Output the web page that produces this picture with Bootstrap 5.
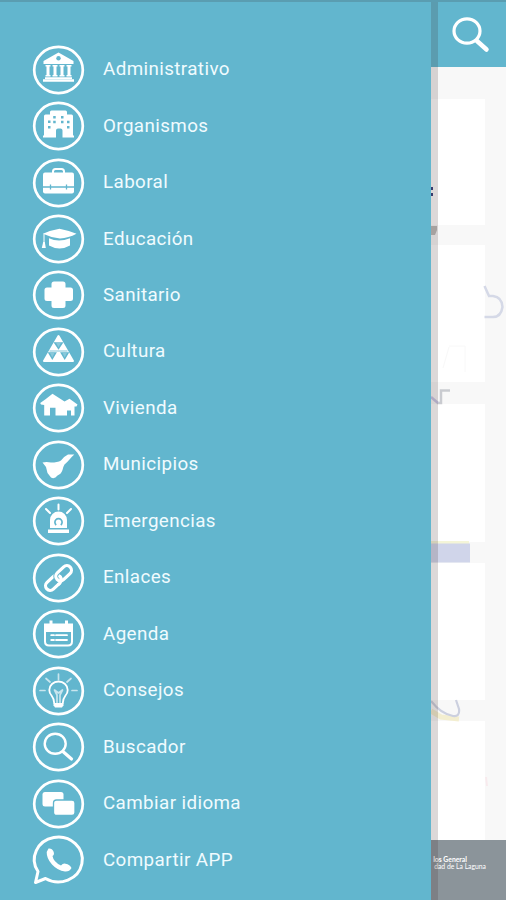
<!DOCTYPE html>
<html lang="es">
<head>
<meta charset="utf-8">
<meta name="viewport" content="width=device-width, initial-scale=1">
<title>Menú</title>
<link href="https://cdn.jsdelivr.net/npm/bootstrap@5.3.0/dist/css/bootstrap.min.css" rel="stylesheet">
<style>
:root{--teal:#62b6ce}
body{font-family:Roboto,"Liberation Sans",sans-serif;background:#f8f8f8}
.screen{width:506px;height:900px}
.drawer{width:431px;background:var(--teal);padding:41.4px 0 0 32px}
.menu-row{height:56.46px;color:#f0fbfe;font-size:18.8px;letter-spacing:.4px;line-height:1}
.menu-row svg{width:53px;height:56px;margin-right:18px;flex:none;fill:#fff;overflow:visible}
.ln{fill:none;stroke:#fff;stroke-linecap:round;stroke-linejoin:round}
.cut{fill:var(--teal)}
.cutln{fill:none;stroke:var(--teal)}
.page-side{width:75px;background:#f8f8f8}
.topbar{height:67px;background:var(--teal)}
.tile{width:54px;background:#fff}
.foot{height:60px;background:#8b949a;color:#fff;font-family:Lato,sans-serif;font-size:6.8px;line-height:7px;padding-top:16px;white-space:nowrap}
.foot div{direction:rtl;width:55px}
.foot .top-line{width:36px}
.shade{left:431px;top:0;width:7px;height:900px;background:rgba(60,40,40,.18)}
.status{left:0;top:0;width:506px;height:2px;background:#5a9db1}
.strokes{left:431px;top:0}
</style>
<script src="https://cdn.jsdelivr.net/npm/bootstrap@5.3.0/dist/js/bootstrap.bundle.min.js"></script>
</head>
<body>
<svg width="0" height="0" class="position-absolute"><defs>
<ellipse id="ring" rx="24.3" ry="23.1" fill="none" stroke="#fff" stroke-width="2.7"/>
</defs></svg>
<div class="screen d-flex position-relative overflow-hidden">
<nav class="drawer flex-shrink-0 d-flex flex-column">
 <a class="menu-row d-flex align-items-center text-decoration-none" href="#"><svg viewBox="-26.5 -28 53 56"><use href="#ring"/>
  <path d="M0-17.500L15-9V-6H-15V-9ZM-13-5h5v1.500h-1v8.500h1v1.500h-5v-1.500h1v-8.500h-1zM-6-5h5v1.500h-1v8.500h1v1.500h-5v-1.500h1v-8.500h-1zM1-5h5v1.500h-1v8.500h1v1.500h-5v-1.500h1v-8.500h-1zM8-5h5v1.500h-1v8.500h1v1.500h-5v-1.500h1v-8.500h-1zM-13.500 7.300h27v1.700h-27zM-15.500 9.300h31v2.400h-31z"/><circle class="cut" cy="-11.800" r="2.200"/></svg><span>Administrativo</span></a>
 <a class="menu-row d-flex align-items-center text-decoration-none" href="#"><svg viewBox="-26.5 -28 53 56"><use href="#ring"/>
  <path d="M-14.500 9.500V-10q0-1.500 1.500-1.500h4.500V-14q0-1.500 1.500-1.500H7q1.500 0 1.500 1.500v2.500H13q1.500 0 1.500 1.500V9.500h1V11.500H4V4.500q0-2-2-2h-2.500q-2 0-2 2v7H-15.500V9.500z"/><path class="cut" d="M-10.500-5.500h2.500v2.500h-2.500zM-5.300-10h2.500v2.500h-2.500zM2.500-10h2.500v2.500H2.500zM-5.300-5.200h2.500v2.500h-2.500zM2.500-5.200h2.500v2.500H2.500zM8.500-5.200h2.500v2.500H8.500zM-10.500 0h2.500v2.500h-2.500zM8.500 0h2.500v2.500H8.500z"/></svg><span>Organismos</span></a>
 <a class="menu-row d-flex align-items-center text-decoration-none" href="#"><svg viewBox="-26.5 -28 53 56"><use href="#ring"/>
  <path class="ln" stroke-width="2" d="M-5.500-10v-1.500q0-2.500 2.500-2.500h6q2.500 0 2.500 2.500v1.500"/><path d="M-13.500-10.500h27q2 0 2 2V8.500q0 2-2 2h-27q-2 0-2-2V-8.500q0-2 2-2z"/><path class="cutln" stroke-width="1.300" d="M-15.500 4H15.500M-8 1.500V6.500M8 1.500V6.500"/></svg><span>Laboral</span></a>
 <a class="menu-row d-flex align-items-center text-decoration-none" href="#"><svg viewBox="-26.5 -28 53 56"><use href="#ring"/>
  <path d="M1-10.300Q9-8.800 18-5.300Q10-1 1.500-.5Q-7-1.200-15.500-5.300Q-8-8.800 1-10.300zM-9.500-.700Q0 3.800 11.500-.700V6.500Q1 12.500-9.500 6.500z"/><path class="ln" stroke-width="1" d="M-14.500-5V4"/><path d="M-15.300 3h1.600l1 6h-4z"/></svg><span>Educación</span></a>
 <a class="menu-row d-flex align-items-center text-decoration-none" href="#"><svg viewBox="-26.5 -28 53 56"><use href="#ring"/>
  <path d="M-4.500-13.500h9q2.500 0 2.500 2.500v3.500h5q2.500 0 2.500 2.500V3.500Q14.500 6 12 6H7v4.500q0 2.500-2.500 2.500h-9Q-7 13-7 10.500V6h-4.500Q-14 6-14 3.500V-5q0-2.500 2.500-2.500H-7V-11q0-2.500 2.500-2.500z"/></svg><span>Sanitario</span></a>
 <a class="menu-row d-flex align-items-center text-decoration-none" href="#"><svg viewBox="-26.5 -28 53 56"><use href="#ring"/>
  <path stroke="#fff" stroke-linejoin="round" stroke-width="2" d="M0-16L14.500 9H-14.500z"/><path class="cut" d="M-5-9.800H5L0-2.300zM-10.800 .200H-1.600L-6.200 8zM1.600 .200H10.800L6.200 8z"/><path d="M-2.500-9.200H2.500L0-4.800zM-8.500 1H-4L-6.200 5.500zM4 1H8.500L6.200 5.500z" opacity=".25"/><path class="cutln" stroke-width=".8" d="M-9-1H9"/></svg><span>Cultura</span></a>
 <a class="menu-row d-flex align-items-center text-decoration-none" href="#"><svg viewBox="-26.5 -28 53 56"><use href="#ring"/>
  <path d="M-6-14.300L6-6.500L11-9.200L19-3.500L18-1.500H16V7.500H12.500V2.500H8.500V7.500H-3V-.300H-8.500V7.500H-14.300V-3L-17.500-3.500L-18.300-5L-13-8.800z"/></svg><span>Vivienda</span></a>
 <a class="menu-row d-flex align-items-center text-decoration-none" href="#"><svg viewBox="-26.5 -28 53 56"><use href="#ring"/>
  <path d="M15.800-10.500Q13-8 11-5.500Q8.500-2.500 6-.500Q4.500 2 4 5Q2.800 9-1 10.500Q-4 14.500-7.500 12.500L-11 8L-12.500 2L-16-2.500Q-12-3.500-7.500-2.500Q-1-2.500 2.500-4.500Q6-9 9.500-10.500z"/></svg><span>Municipios</span></a>
 <a class="menu-row d-flex align-items-center text-decoration-none" href="#"><svg viewBox="-26.5 -28 53 56"><use href="#ring"/>
  <path d="M-8.500 7V-1A8.500 8.500 0 0 1 8.500-1V7zM-10.500 8.500h21v3.500h-21z"/><path class="cutln" stroke-width="1.700" d="M-2.300 4A3.600 3.600 0 1 1 2.300 4"/><path class="ln" stroke-linecap="butt" stroke-width="2" d="M0-16.500V-11.500M-12.500-12L-8.500-8M12.500-12L8.500-8"/></svg><span>Emergencias</span></a>
 <a class="menu-row d-flex align-items-center text-decoration-none" href="#"><svg viewBox="-26.5 -28 53 56"><use href="#ring"/>
  <g transform="rotate(-43)" class="ln" stroke-width="3.200"><rect x="-16" y="-4.600" width="18" height="9.200" rx="4.600"/><rect stroke="#62b6ce" stroke-width="5" x="-2" y="-4.600" width="18" height="9.200" rx="4.600"/><rect x="-2" y="-4.600" width="18" height="9.200" rx="4.600"/><path d="M-4 4.600H-2.600A4.600 4.600 0 0 0 2 0"/></g></svg><span>Enlaces</span></a>
 <a class="menu-row d-flex align-items-center text-decoration-none" href="#"><svg viewBox="-26.5 -28 53 56"><use href="#ring"/>
  <path d="M-14.500-10.500h5.500V-13.500h3v3H6.500V-13.500h3v3h5V-2h-29z"/><path class="ln" stroke-width="2" d="M-13.500-4V7.500Q-13.500 11.500-9.500 11.500H9.500Q13.500 11.500 13.500 7.500V-4"/><path class="ln" stroke-linecap="butt" stroke-width="1.800" d="M-7.300 1.200h2.800M-2.500 1.200H8.500M-7.300 6h2.800M-2.500 6H8.500"/></svg><span>Agenda</span></a>
 <a class="menu-row d-flex align-items-center text-decoration-none" href="#"><svg viewBox="-26.5 -28 53 56"><use href="#ring"/>
  <path class="ln" stroke-width="1.800" d="M-4.300 12Q-4.300 8-7 4.500Q-9.200 2-9.200-1A9.200 8.500 0 0 1 9.200-1Q9.200 2 7 4.500Q4.300 8 4.300 12"/><path d="M-5 12H5v2.200L3.500 16.500h-7L-5 14.200z"/><path class="ln" opacity=".65" stroke-width="1.700" d="M-1.500 11.500V4L-4-1L0 2L4-1L1.500 4V11.500M0-17V-11.500M-12.500-12.500L-8.500-9M12.500-12.500L8.500-9M-18.500-.500H-13.500M18.500-.500H13.500"/></svg><span>Consejos</span></a>
 <a class="menu-row d-flex align-items-center text-decoration-none" href="#"><svg viewBox="-26.5 -28 53 56"><use href="#ring"/>
  <ellipse class="ln" stroke-width="2.400" cx="-3.300" cy="-3.300" rx="10.500" ry="10"/><path class="ln" stroke-width="3.200" d="M5 5L13 12"/></svg><span>Buscador</span></a>
 <a class="menu-row d-flex align-items-center text-decoration-none" href="#"><svg viewBox="-26.5 -28 53 56"><use href="#ring"/>
  <rect x="-16" y="-12" width="21" height="14.500" rx="2.500"/><rect x="-5" y="-4" width="21.500" height="15.500" rx="3" stroke="#62b6ce" stroke-width="1.300"/></svg><span>Cambiar idioma</span></a>
 <a class="menu-row d-flex align-items-center text-decoration-none" href="#"><svg viewBox="-26.5 -28 53 56">
  <path class="ln" stroke-width="3" stroke-linejoin="miter" d="M-20.500 11.500A24 22.400 0 1 1-13 18.500L-23 22.500z"/><path d="M-10-11.500Q-6.500-12-5-8.500Q-3.700-5.500-6-4Q-5 2 2.500 5.500Q4.500 3 7 3.700Q11.500 4.500 13 8Q11 11.800 6.500 11.500Q-1 10.500-6.500 4.500Q-12-1.500-11.800-8Z"/></svg><span>Compartir APP</span></a>
</nav>
<main class="page-side d-flex flex-column">
 <div class="topbar flex-shrink-0"></div>
 <div class="d-flex flex-column flex-grow-1">
  <div class="tile" style="height:126px;margin-top:32px"></div>
  <div class="tile" style="height:137px;margin-top:20px"></div>
  <div class="tile" style="height:138px;margin-top:22px"></div>
  <div class="tile" style="height:137px;margin-top:21px"></div>
  <div class="tile flex-grow-1" style="margin-top:21px"></div>
 </div>
 <div class="foot overflow-hidden flex-shrink-0"><div class="top-line fw-bold">los General</div><div>dad de La Laguna</div></div>
</main>
<svg class="strokes position-absolute" width="75" height="900" fill="none">
 <ellipse cx="36" cy="31" rx="13" ry="12.200" stroke="#fff" stroke-width="3.200"/><path d="M46 41L55.500 49.500" stroke="#fff" stroke-width="4.500" stroke-linecap="round"/>
 <path d="M0 187h2v3H0zM0 193h2v3H0z" fill="#39417c"/>
 <path d="M0 226h6v4l-2 5H0z" fill="#bdbcba"/>
 <path d="M53.500 286L58 296H62Q71 297 71.500 307Q70 317 62 317H53.500" stroke="#d5d9e7" stroke-width="2.500"/>
 <path d="M6 403H10V390.500H19" stroke="#c9cbd0" stroke-width="2.500"/><path d="M0 397L7 403" stroke="#c9c6e5" stroke-width="2.500"/>
 <path d="M18 346H34V372M18 347L12 368" stroke="#f8f8f8"/>
 <path fill="#f4f5d8" d="M0 541h38v3H0z"/><path fill="#d0d5ea" d="M0 543.500h39v19H0z"/>
 <path d="M0 711L10 717L28 719" stroke="#f3eed0" stroke-width="5"/><path d="M0 701Q10 714 22 716Q29 717 28 709L25 700" stroke="#ccd0df" stroke-width="2.200"/>
 <path d="M55 777L56 786" stroke="#f8eaed" stroke-width="2"/>
</svg>
<div class="shade position-absolute"></div>
<div class="status position-absolute"></div>
</div>
</body>
</html>
